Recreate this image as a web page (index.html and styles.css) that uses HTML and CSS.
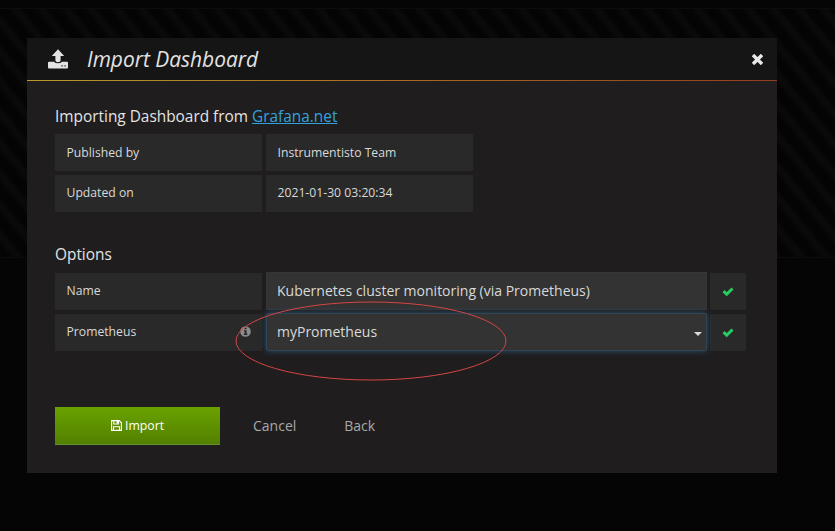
FILE: index.html
```html
<!DOCTYPE html>
<html lang="en">
<head>
<meta charset="utf-8">
<title>Import Dashboard</title>
<link rel="stylesheet" href="styles.css">
</head>
<body>
<div class="hatch"></div>
<main class="modal">
  <header class="modal-header">
    <svg class="upload" width="20" height="20" viewBox="0 0 20 20"><path fill="#e3e3e3" d="M10 .3 16.2 7H12.6V11.5Q12.6 13.200 10 13.200T7.400 11.500V7H3.800ZM1 12.700H6Q7.200 14.200 10 14.200T14 12.700H19Q20 12.700 20 13.700V18.500Q20 19.500 19 19.500H1Q0 19.500 0 18.500V13.700Q0 12.700 1 12.700Z"/><path fill="#151515" d="M13.500 16.200h1.200v1.200h-1.200zM16.500 16.200h1.200v1.200h-1.200z"/></svg>
    <h1>Import Dashboard</h1>
    <svg class="close" width="11" height="11" viewBox="0 0 11 11"><path d="M2.200 2.200 8.800 8.800M8.800 2.200 2.200 8.800" stroke="#e8e8e8" stroke-width="3.400" stroke-linecap="square" stroke-linejoin="round"/></svg>
  </header>
  <div class="content">
    <h2>Importing Dashboard from <a>Grafana.net</a></h2>
    <div class="row"><div class="label">Published by</div><div class="label">Instrumentisto Team</div></div>
    <div class="row raised"><div class="label">Updated on</div><div class="label">2021-01-30 03:20:34</div></div>
    <h2 class="options">Options</h2>
    <div class="row raised">
      <div class="label">Name</div>
      <div class="input">Kubernetes cluster monitoring (via Prometheus)</div>
      <div class="status"><svg width="12" height="9" viewBox="0 0 12 9"><path d="M1.500 4.200 4.700 7.200 10.500 1.500" fill="none" stroke="#25cc60" stroke-width="3"/></svg></div>
    </div>
    <div class="row raised">
      <div class="label">Prometheus<svg class="info" width="11" height="11" viewBox="0 0 11 11"><circle cx="5.500" cy="5.500" r="5.300" fill="#8b8b8b"/><path fill="#292929" d="M4.600 1.700h2v1.600h-2zM3.900 4.300h2.700v3.500h.8v1.300H3.800V7.800h.8V5.500h-.7z"/></svg></div>
      <div class="input focused">myPrometheus<i class="caret"></i></div>
      <div class="status"><svg width="12" height="9" viewBox="0 0 12 9"><path d="M1.500 4.200 4.700 7.200 10.500 1.500" fill="none" stroke="#25cc60" stroke-width="3"/></svg></div>
    </div>
    <div class="actions">
      <div class="button"><svg width="11" height="11" viewBox="0 0 11 11"><path d="M.6.6H8.200L10.400 2.800V10.400H.6ZM2.800.6V4H7.500V.6M2.500 10.400V6.700H8.500V10.400" fill="none" stroke="#fff" stroke-width="1.100"/><path fill="#fff" d="M5.500 1h1.500v2.500H5.500z"/></svg><span>Import</span></div>
      <span class="cancel">Cancel</span><span class="back">Back</span>
    </div>
  </div>
</main>
<svg class="ellipse" width="274" height="82" viewBox="0 0 274 82"><ellipse cx="137" cy="41" rx="135" ry="39" fill="none" stroke="#d44545" stroke-width="1"/></svg>
</body>
</html>
```
FILE: styles.css
```css
* { box-sizing: border-box; }
body {
  margin: 0;
  height: 531px;
  padding: 38px 0 0 27px;
  overflow: hidden;
  background: #050505;
  color: #d8d9da;
  font-family: "Open Sans", "Noto Sans", sans-serif;
}
.hatch {
  position: absolute;
  z-index: -1;
  top: 8px;
  left: 0;
  width: 835px;
  height: 250px;
  border: 1px solid #0c0c0c;
  border-width: 1px 0;
  background: repeating-linear-gradient(50.500deg, #040404 0, #040404 7px, #0a0a0a 13px, #090909 16px, #040404 19.500px);
}
.modal { width: 750px; height: 435px; background: #1f1d1e; }
.modal-header {
  display: flex;
  align-items: center;
  height: 43px;
  padding: 0 14px 0 21px;
  background: #151515;
  border-bottom: 1px solid;
  border-image: linear-gradient(90deg, #b99a2a, #a96a22 50%, #933e20) 1;
}
h1 { flex: 1; margin: 0 0 0 19px; font-size: 20.900px; font-weight: 400; font-style: italic; line-height: 30px; color: #e3e3e3; }
.content { padding: 24px 28px 0; }
h2 { margin: 0; height: 29px; font-size: 15.400px; font-weight: 400; line-height: 24px; color: #e3e3e3; }
h2 a { color: #33a2dc; text-decoration: underline; }
h2.options { margin-top: 28px; height: 33px; line-height: 30px; }
.row { display: flex; gap: 4px; height: 37px; margin-bottom: 4px; }
.label {
  display: flex;
  justify-content: space-between;
  align-items: center;
  width: 207px;
  padding: 0 11px 1px 11.500px;
  background: #292929;
  font-size: 12.200px;
}
.raised .label { padding-bottom: 3px; }
.input {
  position: relative;
  display: flex;
  justify-content: space-between;
  align-items: center;
  width: 441px;
  height: 38px;
  margin-top: -1px;
  padding: 0 4px 2px 10px;
  border: 1px solid #363636;
  background: #333;
  font-size: 14px;
}
.focused { padding-bottom: 1px; border-color: #304656; border-radius: 2px; box-shadow: 0 0 6px #29506d; }
.caret { margin-top: 5px; border: 4px solid transparent; border-top-color: #d8d9da; border-bottom: 0; }
.status { display: flex; align-items: center; justify-content: center; width: 36px; margin-left: -1px; padding-bottom: 1px; background: #292929; }
.actions { display: flex; align-items: center; height: 38px; margin-top: 56px; font-size: 14px; color: #a8a8a8; }
.button {
  display: flex;
  align-items: center;
  justify-content: center;
  gap: 3px;
  width: 165px;
  height: 38px;
  margin-right: 33px;
  background: linear-gradient(#6aa200, #528000);
  border-bottom: 1px solid #66912a;
  color: #fff;
  font-size: 12.250px;
}
.cancel { margin-right: 48px; }
.cancel, .back { padding-bottom: 2px; }
.ellipse { position: absolute; left: 234px; top: 300px; }
```
